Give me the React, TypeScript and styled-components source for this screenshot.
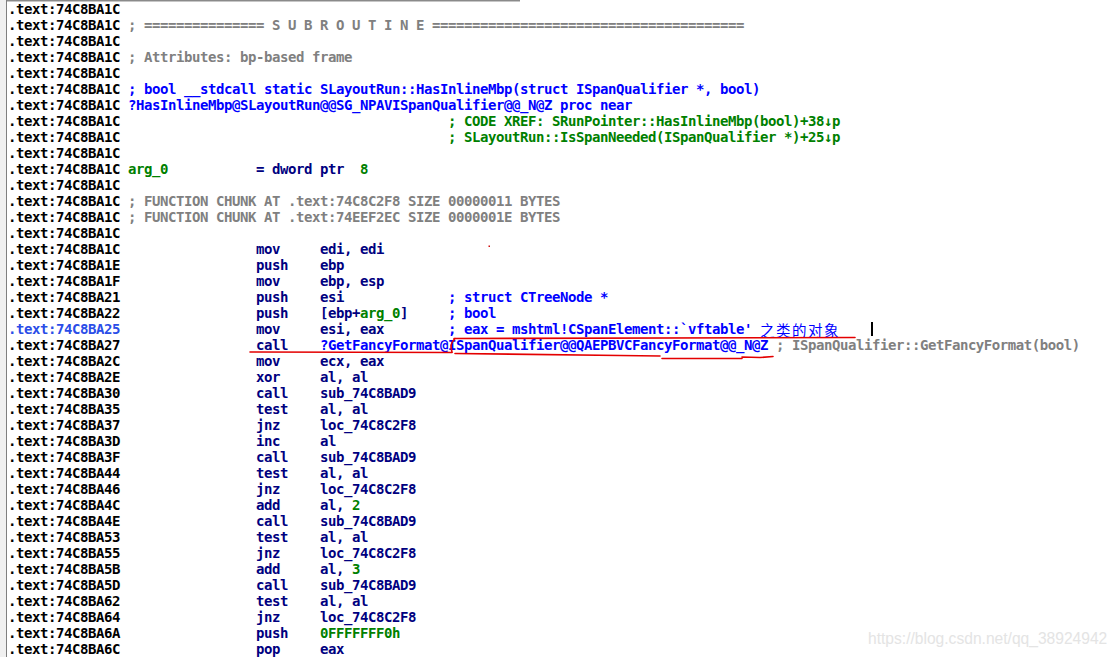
import React from "react";
import styled, { createGlobalStyle } from "styled-components";

const Global = createGlobalStyle`
  html, body { margin: 0; padding: 0; background: #ffffff; }
  body { width: 1120px; height: 657px; overflow: hidden; }
`;

type Tone = "addr" | "hot" | "ins" | "cmt" | "blue" | "green" | "han";

const tones: Record<Tone, string> = {
  addr: "#000000",
  hot: "#2a4de8",
  ins: "#000080",
  cmt: "#808080",
  blue: "#0000ff",
  green: "#008000",
  han: "#0000ff",
};

type Seg = [Tone, string];

const Screen = styled.div`
  position: relative;
  width: 1120px;
  height: 657px;
  display: flex;
  background: #ffffff;
  overflow: hidden;
`;

const Gutter = styled.div`
  flex: none;
  width: 6px;
  background: #f0f0f0;
  border-right: 1px solid #7f7f7f;
`;

const Listing = styled.div`
  flex: 1;
  display: flex;
  flex-direction: column;
  padding-left: 1px;
  font-family: "DejaVu Sans Mono", "Liberation Mono", monospace;
  font-weight: bold;
  font-size: 14px;
  letter-spacing: -0.43px;
`;

const TopEdge = styled.div`
  flex: none;
  width: 513px;
  height: 1px;
  margin-left: -1px;
  margin-bottom: 1px;
  background: #8a8a8a;
  box-shadow: 0 1px 0 #c6c6c6;
`;

const Row = styled.div`
  flex: none;
  height: 16px;
  line-height: 15px;
  white-space: pre;
`;

const Span = styled.span<{ $tone: Tone }>`
  color: ${(p) => tones[p.$tone]};
`;

const Han = styled.span`
  display: inline-block;
  height: 15px;
  line-height: 15px;
  vertical-align: top;
  overflow: visible;
  font-family: "Noto Sans CJK SC", sans-serif;
  font-weight: 400;
  font-size: 14.5px;
  letter-spacing: 1.5px;
  color: #0000ff;
`;

const Marks = styled.svg`
  position: absolute;
  left: 0;
  top: 0;
  pointer-events: none;
`;

const Watermark = styled.div`
  position: absolute;
  left: 868px;
  top: 630px;
  font-family: "Liberation Sans", Arial, sans-serif;
  font-size: 15.6px;
  line-height: 18px;
  color: #e4e4e4;
  white-space: nowrap;
`;

const P = (s: string) => ".text:74C8BA" + s;

function line(addr: string, items: Array<[number, Seg[]]> = [], hot = false): Seg[] {
  const out: Seg[] = [[hot ? "hot" : "addr", P(addr)]];
  let col = 14;
  for (const [target, segs] of items) {
    const pad = Math.max(target - col, 1);
    out.push(["addr", " ".repeat(pad)]);
    col += pad;
    for (const s of segs) {
      out.push(s);
      col += s[0] === "han" ? s[1].length * 2 : s[1].length;
    }
  }
  return out;
}

function ins(addr: string, mnem: string, ops: Seg[], comment?: Seg[], hot = false): Seg[] {
  const items: Array<[number, Seg[]]> = [
    [31, [["ins", mnem]]],
    [39, ops],
  ];
  if (comment) items.push([55, comment]);
  return line(addr, items, hot);
}

const SUB = "sub_74C8BAD9";
const LOC = "loc_74C8C2F8";

const rows: Seg[][] = [
  line("1C"),
  line("1C", [[15, [["cmt", "; =============== S U B R O U T I N E ======================================="]]]]),
  line("1C"),
  line("1C", [[15, [["cmt", "; Attributes: bp-based frame"]]]]),
  line("1C"),
  line("1C", [[15, [["blue", "; bool __stdcall static SLayoutRun::HasInlineMbp(struct ISpanQualifier *, bool)"]]]]),
  line("1C", [[15, [["blue", "?HasInlineMbp@SLayoutRun@@SG_NPAVISpanQualifier@@_N@Z proc near"]]]]),
  line("1C", [[55, [["green", "; CODE XREF: SRunPointer::HasInlineMbp(bool)+38\u2193p"]]]]),
  line("1C", [[55, [["green", "; SLayoutRun::IsSpanNeeded(ISpanQualifier *)+25\u2193p"]]]]),
  line("1C"),
  line("1C", [
    [15, [["green", "arg_0"]]],
    [31, [["ins", "= dword ptr  "], ["green", "8"]]],
  ]),
  line("1C"),
  line("1C", [[15, [["cmt", "; FUNCTION CHUNK AT .text:74C8C2F8 SIZE 00000011 BYTES"]]]]),
  line("1C", [[15, [["cmt", "; FUNCTION CHUNK AT .text:74EEF2EC SIZE 0000001E BYTES"]]]]),
  line("1C"),
  ins("1C", "mov", [["ins", "edi, edi"]]),
  ins("1E", "push", [["ins", "ebp"]]),
  ins("1F", "mov", [["ins", "ebp, esp"]]),
  ins("21", "push", [["ins", "esi"]], [["blue", "; struct CTreeNode *"]]),
  ins("22", "push", [["ins", "[ebp+"], ["green", "arg_0"], ["ins", "]"]], [["blue", "; bool"]]),
  ins("25", "mov", [["ins", "esi, eax"]], [["blue", "; eax = mshtml!CSpanElement::`vftable' "], ["han", "之类的对象"]], true),
  ins("27", "call", [["blue", "?GetFancyFormat@ISpanQualifier@@QAEPBVCFancyFormat@@_N@Z"]], [["cmt", "; ISpanQualifier::GetFancyFormat(bool)"]]),
  ins("2C", "mov", [["ins", "ecx, eax"]]),
  ins("2E", "xor", [["ins", "al, al"]]),
  ins("30", "call", [["ins", SUB]]),
  ins("35", "test", [["ins", "al, al"]]),
  ins("37", "jnz", [["ins", LOC]]),
  ins("3D", "inc", [["ins", "al"]]),
  ins("3F", "call", [["ins", SUB]]),
  ins("44", "test", [["ins", "al, al"]]),
  ins("46", "jnz", [["ins", LOC]]),
  ins("4C", "add", [["ins", "al, "], ["green", "2"]]),
  ins("4E", "call", [["ins", SUB]]),
  ins("53", "test", [["ins", "al, al"]]),
  ins("55", "jnz", [["ins", LOC]]),
  ins("5B", "add", [["ins", "al, "], ["green", "3"]]),
  ins("5D", "call", [["ins", SUB]]),
  ins("62", "test", [["ins", "al, al"]]),
  ins("64", "jnz", [["ins", LOC]]),
  ins("6A", "push", [["green", "0FFFFFFF0h"]]),
  ins("6C", "pop", [["ins", "eax"]]),
];

export default function App() {
  return (
    <Screen>
      <Global />
      <Gutter />
      <Listing>
        <TopEdge />
        {rows.map((segs, i) => (
          <Row key={i}>
            {segs.map(([tone, text], j) =>
              tone === "han" ? (
                <Han key={j}>{text}</Han>
              ) : (
                <Span key={j} $tone={tone}>
                  {text}
                </Span>
              )
            )}
          </Row>
        ))}
      </Listing>
      <Marks width={1120} height={657} viewBox="0 0 1120 657">
        <g fill="none" stroke="#e40000" strokeWidth={1.6} strokeLinecap="round" strokeLinejoin="round">
          <path d="M454 338.5 C 560 337, 700 337.5, 855 337.5" />
          <path d="M455 338.5 Q 449 344 452 352" />
          <path d="M250 352 L 452 352.5" />
          <path d="M455 353.5 L 620 355.5 L 660 356 M662 358.5 L 742 358.5 M742 357 L 760 357.5 L 773 356.5" />
        </g>
        <rect x={871} y={322} width={2} height={14} fill="#000000" />
        <rect x={488.5} y={245.5} width={1.5} height={1.5} fill="#d01010" />
      </Marks>
      <Watermark>https://blog.csdn.net/qq_38924942</Watermark>
    </Screen>
  );
}
